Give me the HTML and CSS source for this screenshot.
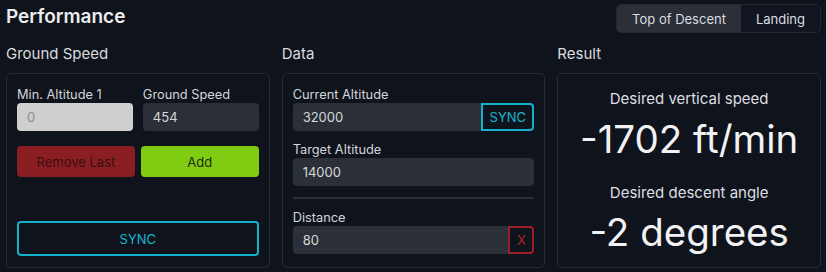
FILE: index.html
```html
<!DOCTYPE html>
<html>
<head>
<meta charset="utf-8">
<link rel="stylesheet" href="styles.css">
</head>
<body>
<div class="page">
  <header class="header">
    <h1 class="title">Performance</h1>
    <div class="tabs">
      <div class="tab active">Top of Descent</div>
      <div class="tab">Landing</div>
    </div>
  </header>
  <main class="grid">
    <section class="col">
      <h2 class="col-title">Ground Speed</h2>
      <div class="card card-gs">
        <div class="pair">
          <div class="field">
            <label class="label">Min. Altitude 1</label>
            <div class="input input-light">0</div>
          </div>
          <div class="field">
            <label class="label">Ground Speed</label>
            <div class="input">454</div>
          </div>
        </div>
        <div class="btn-row">
          <button class="btn btn-red">Remove Last</button>
          <button class="btn btn-green">Add</button>
        </div>
        <button class="btn-sync">SYNC</button>
      </div>
    </section>
    <section class="col">
      <h2 class="col-title">Data</h2>
      <div class="card card-data">
        <div class="field">
          <label class="label">Current Altitude</label>
          <div class="group">
            <div class="input grow">32000</div>
            <button class="addon addon-sync">SYNC</button>
          </div>
        </div>
        <div class="field field-gap">
          <label class="label">Target Altitude</label>
          <div class="input">14000</div>
        </div>
        <div class="divider"></div>
        <div class="field">
          <label class="label">Distance</label>
          <div class="group">
            <div class="input grow">80</div>
            <button class="addon addon-x">X</button>
          </div>
        </div>
      </div>
    </section>
    <section class="col">
      <h2 class="col-title">Result</h2>
      <div class="card card-result">
        <div class="res-label">Desired vertical speed</div>
        <div class="res-value">-1702 ft/min</div>
        <div class="res-label res-label2">Desired descent angle</div>
        <div class="res-value res-value2">-2 degrees</div>
      </div>
    </section>
  </main>
</div>
</body>
</html>
```
FILE: styles.css
```css
* { box-sizing: border-box; }
html, body { margin: 0; padding: 0; }
body {
  background: #0f131b;
  font-family: Inter, "Noto Sans", sans-serif;
  color: #e4e4e6;
  width: 826px;
  height: 272px;
  overflow: hidden;
}
.page { padding: 4px 5px 0 6px; }
.header {
  display: flex;
  justify-content: space-between;
  align-items: flex-start;
  height: 29px;
}
.title {
  margin: 0;
  font-size: 19px;
  line-height: 25px;
  font-weight: 600;
  color: #ececee;
}
.tabs {
  display: flex;
  height: 29px;
  border: 1px solid #23272f;
  border-radius: 5px;
  background: #111520;
  overflow: hidden;
}
.tab {
  display: flex;
  align-items: center;
  padding: 0 15px;
  font-size: 13px;
  color: #dcdde0;
}
.tab.active { background: #2a2f38; }
.grid {
  display: grid;
  grid-template-columns: 1fr 1fr 1fr;
  column-gap: 12px;
  margin-top: 11px;
}
.col { display: flex; flex-direction: column; }
.col-title {
  margin: 0 0 9px;
  font-size: 15px;
  line-height: 20px;
  font-weight: 400;
  color: #dadbde;
}
.card {
  height: 195px;
  border: 1px solid #272b34;
  border-radius: 5px;
  padding: 13px 10px 11px;
}
.card-gs { display: flex; flex-direction: column; }
.pair { display: grid; grid-template-columns: 1fr 1fr; column-gap: 10px; }
.field { display: flex; flex-direction: column; }
.label {
  font-size: 12.8px;
  line-height: 16px;
  color: #d4d5d8;
}
.input {
  height: 28px;
  border-radius: 4px;
  background: #2a2f38;
  color: #d6d7da;
  font-size: 13px;
  line-height: 28px;
  padding: 0 10px;
}
.input-light { background: #cfcfcf; color: #8e8e8e; }
.btn-row {
  display: grid;
  grid-template-columns: 1fr 1fr;
  column-gap: 6px;
  margin-top: 15px;
}
.btn {
  height: 31px;
  border: none;
  border-radius: 4px;
  font-family: inherit;
  font-size: 13px;
  padding: 0;
}
.btn-red { background: #8a1e23; color: #3b0f12; }
.btn-green { background: #7fcc13; color: #1f2b08; }
.btn-sync {
  margin-top: auto;
  height: 35px;
  background: transparent;
  border: 2px solid #14b1ca;
  border-radius: 4px;
  color: #17b6cf;
  font-family: inherit;
  font-size: 13px;
  padding: 0;
}
.group { display: flex; }
.grow { flex: 1; border-radius: 4px 0 0 4px; }
.addon {
  height: 28px;
  background: transparent;
  font-family: inherit;
  font-size: 13px;
  padding: 0;
  border-radius: 0 4px 4px 0;
}
.addon-sync {
  width: 53px;
  border: 2px solid #14b1ca;
  color: #17b6cf;
}
.addon-x {
  width: 26px;
  border: 2px solid #9b1f26;
  color: #b0262d;
}
.field-gap { margin-top: 11px; }
.divider {
  height: 2px;
  background: #2a2f38;
  margin: 11px 0;
}
.card-result {
  display: flex;
  flex-direction: column;
  align-items: center;
  padding-top: 16px;
}
.res-label {
  font-size: 15px;
  line-height: 18px;
  color: #dedfe2;
}
.res-label2 { margin-top: 23px; }
.res-value {
  font-size: 38.5px;
  line-height: 44px;
  color: #f2f2f4;
  margin-top: 9px;
}
.res-value2 { margin-top: 8px; }
```
